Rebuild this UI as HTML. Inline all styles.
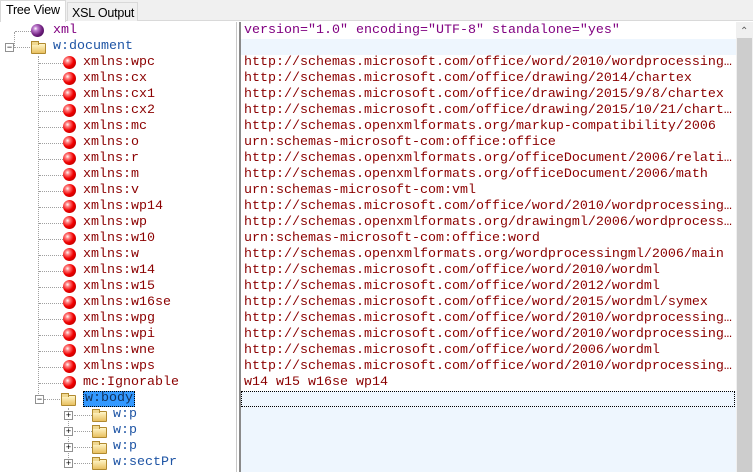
<!DOCTYPE html>
<html><head><style>
*{margin:0;padding:0;box-sizing:border-box}
body{width:753px;height:472px;overflow:hidden;background:#fff;position:relative;font-family:"Liberation Mono",monospace;font-size:13.33px}
.a{position:absolute}
.t{position:absolute;white-space:nowrap;line-height:16px;height:16px}
.ball{position:absolute;width:13px;height:13px;border-radius:50%}
.red{background:radial-gradient(circle at 35% 35%,#fff 0,#ff8080 18%,#f00000 50%,#a00000 100%)}
.pur{background:radial-gradient(circle at 35% 35%,#fff 0,#c080d0 18%,#70207f 55%,#300040 100%)}
.fold{position:absolute;width:15px;height:11px;background:linear-gradient(#fff6c8,#e8c060);border:1px solid #b08a30;border-radius:1px}
.fold:before{content:"";position:absolute;left:-1px;top:-3px;width:6px;height:3px;background:#f0d890;border:1px solid #b08a30;border-bottom:none}
.box{position:absolute;width:9px;height:9px;border:1px solid #919191;background:#fff;font:9px/7px "Liberation Sans",sans-serif;text-align:center;color:#000}
.hd{position:absolute;border-top:1px dotted #a0a0a0;height:1px}
.vd{position:absolute;border-left:1px dotted #a0a0a0;width:1px}
.r{color:#8b0000}.b{color:#1f55a5}.p{color:#800080}
.tab{white-space:nowrap;overflow:hidden;letter-spacing:-0.2px}
</style></head><body>
<div class="a" style="left:0;top:0;width:753px;height:21px;background:#f0f0f0;border-bottom:1px solid #d9d9d9"></div>
<div class="a tab" style="left:0;top:0;width:66px;height:22px;background:#fff;border:1px solid #d9d9d9;border-bottom:none;font:12.5px/19px 'Liberation Sans',sans-serif;padding-left:5px">Tree View</div>
<div class="a tab" style="left:67px;top:2px;width:71px;height:19px;background:#f0f0f0;border:1px solid #d9d9d9;border-bottom:none;font:12.5px/20px 'Liberation Sans',sans-serif;padding-left:4px">XSL Output</div>
<div class="a" style="left:236px;top:22px;width:1px;height:450px;background:#c8c8c8"></div>
<div class="a" style="left:239px;top:22px;width:2px;height:450px;background:#8a8a8a"></div>
<div class="a" style="left:241px;top:39px;width:495px;height:16px;background:#eef6fe"></div>
<div class="a" style="left:241px;top:391px;width:495px;height:81px;background:#eef6fe"></div>
<div class="a" style="left:241px;top:391px;width:494px;height:16px;border:1px dotted #000"></div>
<div class="a" style="left:736px;top:22px;width:17px;height:450px;background:#f0f0f0"></div>
<div class="a" style="left:737px;top:38px;width:15px;height:434px;background:#cdcdcd"></div>
<div class="t" style="left:740px;top:24px;font:10px/16px 'Liberation Sans',sans-serif;color:#606060">&#8963;</div>
<div id="c"></div>
<script>
var rows=[
["x","xml",'version="1.0" encoding="UTF-8" standalone="yes"'],
["d","w:document",""],
["a","xmlns:wpc","http://schemas.microsoft.com/office/word/2010/wordprocessing…"],
["a","xmlns:cx","http://schemas.microsoft.com/office/drawing/2014/chartex"],
["a","xmlns:cx1","http://schemas.microsoft.com/office/drawing/2015/9/8/chartex"],
["a","xmlns:cx2","http://schemas.microsoft.com/office/drawing/2015/10/21/chart…"],
["a","xmlns:mc","http://schemas.openxmlformats.org/markup-compatibility/2006"],
["a","xmlns:o","urn:schemas-microsoft-com:office:office"],
["a","xmlns:r","http://schemas.openxmlformats.org/officeDocument/2006/relati…"],
["a","xmlns:m","http://schemas.openxmlformats.org/officeDocument/2006/math"],
["a","xmlns:v","urn:schemas-microsoft-com:vml"],
["a","xmlns:wp14","http://schemas.microsoft.com/office/word/2010/wordprocessing…"],
["a","xmlns:wp","http://schemas.openxmlformats.org/drawingml/2006/wordprocess…"],
["a","xmlns:w10","urn:schemas-microsoft-com:office:word"],
["a","xmlns:w","http://schemas.openxmlformats.org/wordprocessingml/2006/main"],
["a","xmlns:w14","http://schemas.microsoft.com/office/word/2010/wordml"],
["a","xmlns:w15","http://schemas.microsoft.com/office/word/2012/wordml"],
["a","xmlns:w16se","http://schemas.microsoft.com/office/word/2015/wordml/symex"],
["a","xmlns:wpg","http://schemas.microsoft.com/office/word/2010/wordprocessing…"],
["a","xmlns:wpi","http://schemas.microsoft.com/office/word/2010/wordprocessing…"],
["a","xmlns:wne","http://schemas.microsoft.com/office/word/2006/wordml"],
["a","xmlns:wps","http://schemas.microsoft.com/office/word/2010/wordprocessing…"],
["a","mc:Ignorable","w14 w15 w16se wp14"],
["B","w:body",""],
["c","w:p",""],["c","w:p",""],["c","w:p",""],["c","w:sectPr",""]];
var h="";
h+='<div class="vd" style="left:14px;top:32px;height:16px"></div>';
h+='<div class="vd" style="left:38px;top:56px;height:344px"></div>';
h+='<div class="vd" style="left:68px;top:408px;height:56px"></div>';
rows.forEach(function(r,i){
 var y=23+i*16,m=y+8,k=r[0];
 if(k=="x"){h+='<div class="hd" style="left:15px;top:'+m+'px;width:16px"></div><div class="ball pur" style="left:31px;top:'+(y+1)+'px"></div><div class="t p" style="left:53px;top:'+y+'px">xml</div>';}
 if(k=="d"||k=="B"){var x=k=="d"?5:35;h+='<div class="hd" style="left:'+(x+9)+'px;top:'+m+'px;width:18px"></div><div class="box" style="left:'+x+'px;top:'+(m-4)+'px">−</div><div class="fold" style="left:'+(x+26)+'px;top:'+(y+4)+'px"></div>';
  if(k=="d")h+='<div class="t b" style="left:53px;top:'+y+'px">'+r[1]+'</div>';
  else h+='<div class="t" style="left:83px;top:'+y+'px;background:#3399ff;color:#10305a;border:1px dotted #000;line-height:14px;padding:0 1px">w:body</div>';}
 if(k=="a"){h+='<div class="hd" style="left:39px;top:'+m+'px;width:24px"></div><div class="ball red" style="left:63px;top:'+(y+1)+'px"></div><div class="t r" style="left:83px;top:'+y+'px">'+r[1]+'</div>';}
 if(k=="c"){h+='<div class="hd" style="left:74px;top:'+m+'px;width:18px"></div><div class="box" style="left:64px;top:'+(m-4)+'px">+</div><div class="fold" style="left:92px;top:'+(y+4)+'px"></div><div class="t b" style="left:113px;top:'+y+'px">'+r[1]+'</div>';}
 if(r[2])h+='<div class="t '+(k=="x"?"p":"r")+'" style="left:244px;top:'+y+'px">'+r[2]+'</div>';
});
document.getElementById("c").innerHTML=h;
</script>
</body></html>
